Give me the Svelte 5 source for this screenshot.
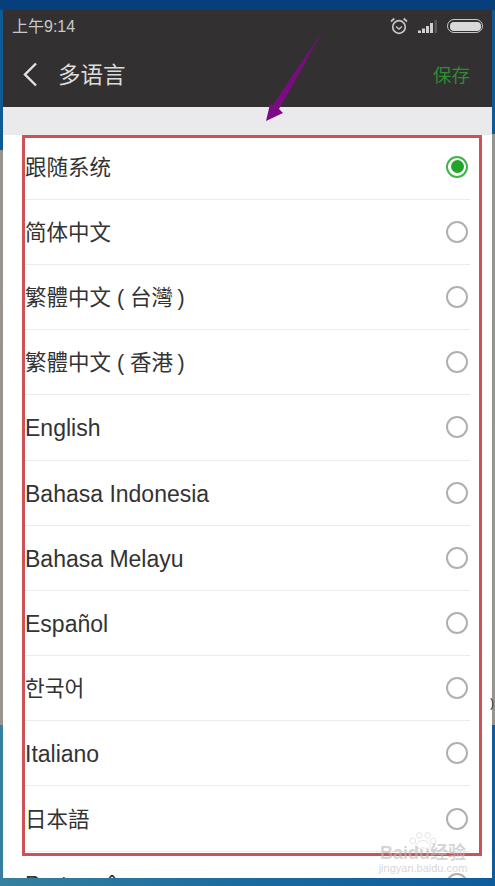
<script>
  const langs = [
    { name: '跟随系统', cjk: true },
    { name: '简体中文', cjk: true },
    { name: '繁體中文 ( 台灣\u2009)', cjk: true },
    { name: '繁體中文 ( 香港\u2009)', cjk: true },
    { name: 'English' },
    { name: 'Bahasa Indonesia' },
    { name: 'Bahasa Melayu' },
    { name: 'Español' },
    { name: '한국어', cjk: true },
    { name: 'Italiano' },
    { name: '日本語', cjk: true },
    { name: 'Português' }
  ];
  let selected = $state(0);
</script>

<div class="page">
  <div class="phone">
    <header class="top">
      <div class="status">
        <span class="time">上午9:14</span>
        <div class="status-icons">
          <svg class="alarm" width="18" height="18" viewBox="0 0 18 18" fill="none" stroke="#c4c4c4">
            <circle cx="9" cy="10" r="6.300" stroke-width="1.700" />
            <path d="M6 9.500l3 2.500 3-2.500" stroke-width="1.500" />
            <path d="M1 4.500 4.300 1.500M17 4.500 13.700 1.500" stroke-width="1.800" />
          </svg>
          <svg class="signal" width="20" height="13" viewBox="0 0 20 13">
            <rect x="0" y="10.500" width="3" height="2.500" fill="#d0d0d0" />
            <rect x="4" y="8.500" width="3" height="4.500" fill="#d0d0d0" />
            <rect x="8" y="6" width="3" height="7" fill="#d0d0d0" />
            <rect x="12" y="3" width="3" height="10" fill="#d0d0d0" />
            <rect x="16.500" y="0" width="2.500" height="13" fill="#5a595a" />
          </svg>
          <div class="battery"><div class="level"></div></div>
        </div>
      </div>
      <div class="nav">
        <svg class="back" width="15" height="25" viewBox="0 0 15 25" fill="none" stroke="#e2e2e2" stroke-width="2.400">
          <path d="M13 1.500 2 12.500 13 23.500" />
        </svg>
        <span class="title">多语言</span>
        <span class="save">保存</span>
      </div>
    </header>

    <div class="gap"></div>

    <ul class="list">
      {#each langs as lang, i}
        <li>
          <button class="row" onclick={() => (selected = i)}>
            <span class="name" class:cjk={lang.cjk}>{lang.name}</span>
            {#if selected === i}
              <span class="radio on"><span class="dot"></span></span>
            {:else}
              <span class="radio"></span>
            {/if}
          </button>
        </li>
      {/each}
    </ul>
  </div>

  <!-- annotations drawn on top of the screenshot -->
  <div class="frame"></div>
  <svg class="arrow" width="80" height="115" viewBox="0 0 80 115">
    <defs>
      <linearGradient id="shaft" x1="70" y1="5" x2="10" y2="105" gradientUnits="userSpaceOnUse">
        <stop offset="0" stop-color="#7d0a85" stop-opacity="0" />
        <stop offset="0.4" stop-color="#7d0a85" stop-opacity="0.8" />
        <stop offset="0.75" stop-color="#7d0a85" />
      </linearGradient>
    </defs>
    <path d="M72 3 19 96 23 100 6 108 10 91 13 92Z" fill="url(#shaft)" />
  </svg>
  <div class="mark">
    <svg class="paw" width="28" height="18" viewBox="0 0 30 26" preserveAspectRatio="none" fill="none" stroke="#c8c8c8" stroke-width="1">
      <ellipse cx="4" cy="13" rx="3" ry="4" />
      <ellipse cx="11" cy="5" rx="3" ry="4" />
      <ellipse cx="20" cy="5" rx="3" ry="4" />
      <ellipse cx="26" cy="13" rx="3" ry="4" />
      <path d="M15 12c-4 0-8 5-8 9 0 3 4 3 8 2 4 1 8 1 8-2 0-4-4-9-8-9Z" />
    </svg>
    <span class="mark-big">Baidu经验</span>
    <span class="mark-small">jingyan.baidu.com</span>
  </div>
  <span class="speck">)</span>
</div>

<style>
  :global(body) { margin: 0; }
  .page {
    position: relative;
    height: 886px;
    overflow: hidden;
    box-sizing: border-box;
    padding: 10px 3px 8px;
    background:
      linear-gradient(#0d5a94, #0d5a94) left top / 3px 150px no-repeat,
      linear-gradient(#0d5a94, #0d5a94) right top / 3px 134px no-repeat,
      linear-gradient(180deg, #97928d 0, #98948e 100%) 0 0 / 100% 725px no-repeat,
      linear-gradient(90deg, #35809f 0, #1a6a9f 50%, #0f5c9c 100%);
    font-family: "Liberation Sans", "Noto Sans CJK SC", sans-serif;
  }
  .page::before {
    content: "";
    position: absolute;
    left: 0;
    right: 0;
    top: 0;
    height: 10px;
    background: #063f7c;
  }
  .phone {
    position: relative;
    height: 100%;
    display: flex;
    flex-direction: column;
    overflow: hidden;
    background: #fff;
  }
  .top {
    background: #323031;
    height: 97px;
    flex: none;
    display: flex;
    flex-direction: column;
  }
  .status {
    display: flex;
    align-items: center;
    justify-content: space-between;
    height: 32px;
    padding: 0 9px 0 9px;
  }
  .time { font-size: 16px; color: #c9c9c9; padding-bottom: 2px; }
  .status-icons { display: flex; align-items: center; }
  .alarm { margin-right: 10px; }
  .signal { margin-right: 9px; }
  .battery {
    width: 36px;
    height: 14px;
    box-sizing: border-box;
    border: 1.500px solid #c8c8c8;
    border-radius: 7px;
    padding: 1.500px;
  }
  .level { height: 100%; background: #d8d8d8; border-radius: 4px; }
  .nav {
    flex: 1;
    display: flex;
    align-items: center;
    padding: 0 22px 0 20px;
  }
  .back { margin-right: 20px; }
  .title { font-size: 22.500px; color: #dcdcdc; flex: 1; padding-bottom: 4px; }
  .save { font-size: 18.500px; color: #2e8c33; padding-bottom: 2px; }
  .gap { height: 27.600px; flex: none; background: #eaeaec; }
  .list {
    list-style: none;
    margin: 0;
    padding: 0;
    flex: none;
  }
  li {
    height: 65.200px;
    box-sizing: border-box;
    margin: 0 22px;
    border-bottom: 1px solid #ebebeb;
  }
  .row {
    width: 100%;
    height: 100%;
    display: flex;
    align-items: center;
    justify-content: space-between;
    padding: 0;
    border: 0;
    background: none;
    font: inherit;
    cursor: pointer;
  }
  .name { font-size: 23px; color: #333; padding-top: 3px; }
  .name.cjk { font-size: 21.500px; padding-top: 0; padding-bottom: 3px; }
  .radio {
    width: 22px;
    height: 22px;
    box-sizing: border-box;
    border: 2px solid #b0b0b0;
    border-radius: 50%;
    margin-right: 2px;
    display: flex;
    align-items: center;
    justify-content: center;
  }
  .radio.on { border-color: #3fb548; }
  .dot { width: 13px; height: 13px; border-radius: 50%; background: #22a52a; }
  .frame {
    position: absolute;
    left: 22px;
    top: 135px;
    width: 460px;
    height: 721px;
    box-sizing: border-box;
    border: 3px solid #cd5257;
    pointer-events: none;
  }
  .arrow { position: absolute; left: 260px; top: 13px; pointer-events: none; }
  .mark {
    position: absolute;
    left: 378px;
    top: 832px;
    width: 90px;
    display: flex;
    flex-direction: column;
    align-items: center;
    color: rgba(185, 185, 185, 0.6);
    pointer-events: none;
  }
  .paw { opacity: 0.6; margin-bottom: -5px; }
  .mark-big { font-size: 18px; font-weight: bold; line-height: 16px; white-space: nowrap; }
  .mark-small { font-size: 11px; line-height: 14px; white-space: nowrap; }
  .speck { position: absolute; left: 490px; top: 696px; font-size: 12px; color: #333; }
</style>
